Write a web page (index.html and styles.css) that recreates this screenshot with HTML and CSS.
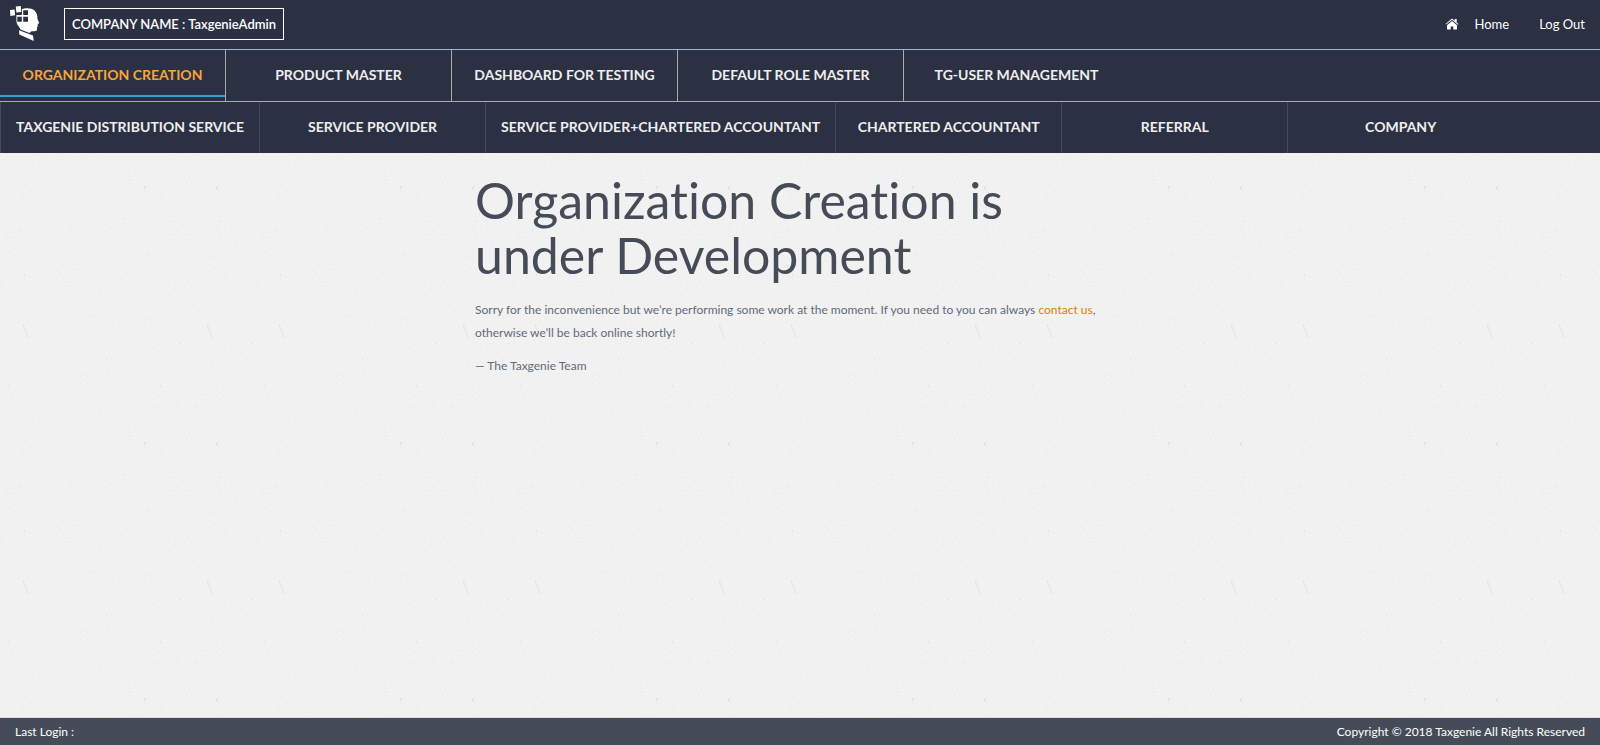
FILE: index.html
```html
<!DOCTYPE html>
<html lang="en">
<head>
<meta charset="utf-8">
<meta name="viewport" content="width=device-width, initial-scale=1">
<title>Taxgenie</title>
<link rel="stylesheet" href="styles.css">
</head>
<body>
<header class="topbar">
  <a class="logo" href="#" aria-label="Taxgenie">
    <svg width="30" height="36" viewBox="0 0 30 36" aria-hidden="true">
      <path fill="#fff" d="M12 3.200C15 1.800 22 1.800 24.500 4.500C27 7 27.600 10 27.500 13L29.200 17L27.700 18.200V20.500L27 21.600V24C26 25.600 24 25.200 21.500 25.300L19.500 27L10.500 23.500C9.800 20.500 6.600 19.500 6.400 15V9H8L12 7Z"/>
      <path fill="#fff" d="M9 24.200L23 29.400L23.800 35L9.300 28.600Z"/>
      <path fill="#2b3042" d="M7.300 10.700h4.500v5h-4.500zM13.200 10.700h4.800v5h-4.800zM13.200 4.200h4.800v4.700h-4.800zM7.300 6.800h4.500v2.200h-4.500z"/>
      <path fill="#fff" d="M0 4l4.600-.4.500 5.700-4.700.6zM5.800.4L10.800 0l.5 6-5 .4z"/>
    </svg>
  </a>
  <div class="company">COMPANY NAME : TaxgenieAdmin</div>
  <nav class="account" aria-label="Account">
    <a class="home" href="#">
      <svg width="14" height="12" viewBox="0 0 14 12" aria-hidden="true">
        <path fill="#fff" d="M7 3L2 7.200V11q0 .6.600.6H5.700V8.400H8.300V11.600H11.400q.6 0 .6-.6V7.200Z"/>
        <path fill="#fff" d="M13.500 6L11.700 4.500V1H9.800V2.800L7.700.9Q7 .4 6.300.9L.5 5.900 1.100 6.600 7 1.800 12.900 6.700Z"/>
      </svg>
      <span>Home</span>
    </a>
    <a href="#">Log Out</a>
  </nav>
</header>
<nav class="tabs" aria-label="Main">
  <a class="tab active" href="#" aria-current="page">ORGANIZATION CREATION</a>
  <a class="tab" href="#">PRODUCT MASTER</a>
  <a class="tab" href="#">DASHBOARD FOR TESTING</a>
  <a class="tab" href="#">DEFAULT ROLE MASTER</a>
  <a class="tab" href="#">TG-USER MANAGEMENT</a>
</nav>
<nav class="subtabs" aria-label="Organization type">
  <a class="subtab" href="#">TAXGENIE DISTRIBUTION SERVICE</a>
  <a class="subtab" href="#">SERVICE PROVIDER</a>
  <a class="subtab" href="#">SERVICE PROVIDER+CHARTERED ACCOUNTANT</a>
  <a class="subtab" href="#">CHARTERED ACCOUNTANT</a>
  <a class="subtab" href="#">REFERRAL</a>
  <a class="subtab" href="#">COMPANY</a>
</nav>
<main class="content">
  <article class="notice">
    <h1>Organization Creation is under Development</h1>
    <p>Sorry for the inconvenience but we’re performing some work at the moment. If you need to you can always <a href="#">contact us</a>, otherwise we’ll be back online shortly!</p>
    <p>— The Taxgenie Team</p>
  </article>
</main>
<footer class="footer">
  <span>Last Login :</span>
  <span>Copyright © 2018 Taxgenie All Rights Reserved</span>
</footer>
</body>
</html>
```
FILE: styles.css
```css
* {
  box-sizing: border-box;
}

body {
  margin: 0;
  min-height: 100vh;
  display: flex;
  flex-direction: column;
  font-family: Lato, "Liberation Sans", sans-serif;
  font-size: 12px;
  font-variant-ligatures: none;
  color: #5f6b7a;
  background-color: #f3f3f3;
  background-image: url("data:image/svg+xml,%3Csvg xmlns='http://www.w3.org/2000/svg' width='256' height='256'%3E%3Cfilter id='n' x='0' y='0' width='100%25' height='100%25'%3E%3CfeTurbulence type='fractalNoise' baseFrequency='.6' numOctaves='2' stitchTiles='stitch'/%3E%3CfeColorMatrix values='0 0 0 0 .4 0 0 0 0 .4 0 0 0 0 .38 .2 0 0 0 -.075'/%3E%3C/filter%3E%3Crect width='256' height='256' filter='url(%23n)'/%3E%3Cg stroke='%23777' stroke-opacity='.22' fill='none'%3E%3Cpath stroke-opacity='.12' d='M207 68l5 14M23 68l5 14'/%3E%3Cpath d='M216 189l2-3M144 189l2-3M24 19h1M29 36h1M125 17h1M252 87h1M180 87h1M106 103h1M124 219h1M220 222h1M147 255h1M60 160h1M90 60h1M8 130h1M236 242h1M43 72h1M70 30h1M160 130h1M195 150h1M50 200h1M100 240h1M170 40h1M20 230h1M130 180h1M80 120h1'/%3E%3C/g%3E%3C/svg%3E");
}

a {
  color: inherit;
  text-decoration: none;
}

.topbar {
  display: flex;
  align-items: center;
  height: 50px;
  padding: 0 15px 1px 10px;
  background: #2b3042;
  border-bottom: 1px solid #f2aa35;
  color: #fff;
}

.logo {
  display: flex;
  margin-right: 24px;
}

.company {
  padding: 0 7px;
  border: 1px solid #fff;
  font-size: 13px;
  line-height: 30px;
  font-weight: 600;
}

.account {
  display: flex;
  gap: 30px;
  margin-left: auto;
  font-size: 13px;
}

.home {
  display: flex;
  align-items: center;
  gap: 15px;
}

.tabs,
.subtabs {
  display: flex;
  background: #2b3042;
  color: #eee;
  font-size: 14px;
  font-weight: 700;
  line-height: 50px;
  text-align: center;
  white-space: nowrap;
}

.tabs {
  border-bottom: 1px solid #aaa;
}

.tab {
  height: 51px;
  min-width: 226px;
  padding: 0 15px;
  border-right: 1px solid #aaa;
}

.tab:last-child {
  border-right-color: transparent;
}

.active {
  color: #f8a43a;
  background: linear-gradient(#2da5dc, #2da5dc) 0 45px / 100% 2px no-repeat;
}

.subtab {
  height: 51px;
  min-width: 226px;
  padding: 0 15px;
  border-left: 1px solid #43485a;
}

.content {
  flex: 1;
}

.notice {
  max-width: 650px;
  margin: 0 auto;
  padding-top: 20px;
}

h1 {
  margin: 0 0 15px;
  color: #454c57;
  font-size: 50px;
  font-weight: 400;
  line-height: 55px;
}

p {
  margin: 0 0 10px;
  line-height: 23px;
}

p a {
  color: #dc8100;
}

.footer {
  display: flex;
  align-items: center;
  justify-content: space-between;
  height: 28px;
  padding: 0 15px;
  border-top: 1px solid #ddd;
  background: #454c57;
  color: #fff;
}
```
